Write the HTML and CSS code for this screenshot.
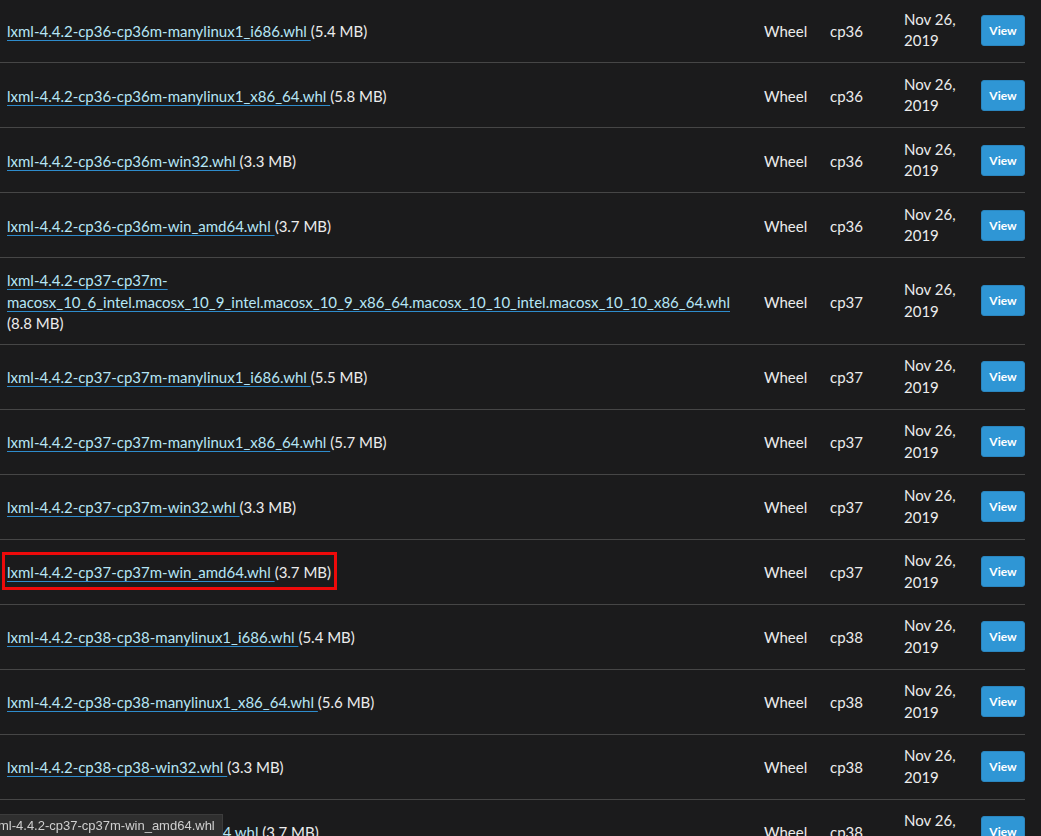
FILE: index.html
```html
<!DOCTYPE html>
<html lang="en">
<head>
<meta charset="utf-8">
<title>lxml files</title>
<link rel="stylesheet" href="styles.css">
</head>
<body>
<div class="page">
<table class="files">
<colgroup>
<col class="c-name"><col class="c-type"><col class="c-py"><col class="c-date"><col class="c-btn">
</colgroup>
<tbody>
<tr><td class="name"><a href="#">lxml-4.4.2-cp36-cp36m-manylinux1_i686.whl </a>(5.4 MB)</td><td>Wheel</td><td>cp36</td><td class="date">Nov 26,<br>2019</td><td class="act"><button class="view">View</button></td></tr>
<tr><td class="name"><a href="#">lxml-4.4.2-cp36-cp36m-manylinux1_x86_64.whl </a>(5.8 MB)</td><td>Wheel</td><td>cp36</td><td class="date">Nov 26,<br>2019</td><td class="act"><button class="view">View</button></td></tr>
<tr><td class="name"><a href="#">lxml-4.4.2-cp36-cp36m-win32.whl </a>(3.3 MB)</td><td>Wheel</td><td>cp36</td><td class="date">Nov 26,<br>2019</td><td class="act"><button class="view">View</button></td></tr>
<tr><td class="name"><a href="#">lxml-4.4.2-cp36-cp36m-win_amd64.whl </a>(3.7 MB)</td><td>Wheel</td><td>cp36</td><td class="date">Nov 26,<br>2019</td><td class="act"><button class="view">View</button></td></tr>
<tr><td class="name"><a href="#">lxml-4.4.2-cp37-cp37m-<br>macosx_10_6_intel.macosx_10_9_intel.macosx_10_9_x86_64.macosx_10_10_intel.macosx_10_10_x86_64.whl</a><br>(8.8 MB)</td><td>Wheel</td><td>cp37</td><td class="date">Nov 26,<br>2019</td><td class="act"><button class="view">View</button></td></tr>
<tr><td class="name"><a href="#">lxml-4.4.2-cp37-cp37m-manylinux1_i686.whl </a>(5.5 MB)</td><td>Wheel</td><td>cp37</td><td class="date">Nov 26,<br>2019</td><td class="act"><button class="view">View</button></td></tr>
<tr><td class="name"><a href="#">lxml-4.4.2-cp37-cp37m-manylinux1_x86_64.whl </a>(5.7 MB)</td><td>Wheel</td><td>cp37</td><td class="date">Nov 26,<br>2019</td><td class="act"><button class="view">View</button></td></tr>
<tr><td class="name"><a href="#">lxml-4.4.2-cp37-cp37m-win32.whl </a>(3.3 MB)</td><td>Wheel</td><td>cp37</td><td class="date">Nov 26,<br>2019</td><td class="act"><button class="view">View</button></td></tr>
<tr><td class="name"><span class="marked"><a href="#">lxml-4.4.2-cp37-cp37m-win_amd64.whl </a>(3.7 MB)</span></td><td>Wheel</td><td>cp37</td><td class="date">Nov 26,<br>2019</td><td class="act"><button class="view">View</button></td></tr>
<tr><td class="name"><a href="#">lxml-4.4.2-cp38-cp38-manylinux1_i686.whl </a>(5.4 MB)</td><td>Wheel</td><td>cp38</td><td class="date">Nov 26,<br>2019</td><td class="act"><button class="view">View</button></td></tr>
<tr><td class="name"><a href="#">lxml-4.4.2-cp38-cp38-manylinux1_x86_64.whl </a>(5.6 MB)</td><td>Wheel</td><td>cp38</td><td class="date">Nov 26,<br>2019</td><td class="act"><button class="view">View</button></td></tr>
<tr><td class="name"><a href="#">lxml-4.4.2-cp38-cp38-win32.whl </a>(3.3 MB)</td><td>Wheel</td><td>cp38</td><td class="date">Nov 26,<br>2019</td><td class="act"><button class="view">View</button></td></tr>
<tr><td class="name"><a href="#">lxml-4.4.2-cp38-cp38-win_amd64.whl </a>(3.7 MB)</td><td>Wheel</td><td>cp38</td><td class="date">Nov 26,<br>2019</td><td class="act"><button class="view">View</button></td></tr>
</tbody>
</table>
</div>
<div class="status">ml-4.4.2-cp37-cp37m-win_amd64.whl</div>
</body>
</html>
```
FILE: styles.css
```css
html, body {
  margin: 0;
  padding: 0;
  background: #1b1b1c;
  height: 100%;
  overflow: hidden;
}
.page {
  margin-top: -2px;
}
.files {
  width: 1025px;
  table-layout: fixed;
  border-collapse: collapse;
  font-family: Lato, "Noto Sans", sans-serif;
  font-size: 15px;
  line-height: 21.5px;
  color: #ececec;
}
.c-name { width: 757px; }
.c-type { width: 66px; }
.c-py { width: 74px; }
.c-date { width: 77px; }
.c-btn { width: 51px; }
.files td {
  padding: 12px 7px 9px;
  border-bottom: 1px solid #464646;
  vertical-align: middle;
}
.files td.date {
  padding-top: 10.5px;
  padding-bottom: 10.5px;
}
.files td.act {
  padding: 10.5px 0 10.5px 7px;
}
.files a {
  color: #b6e6f6;
  text-decoration: underline;
  text-decoration-color: #2e8ccc;
  text-underline-offset: 3px;
  text-decoration-thickness: 1px;
}
.view {
  width: 44px;
  height: 31px;
  border: 1px solid #2a86c0;
  border-radius: 3px;
  background: #2f96d5;
  color: #ffffff;
  font-family: Lato, "Noto Sans", sans-serif;
  font-weight: 700;
  font-size: 12px;
  padding: 0;
  display: block;
}
.marked {
  position: relative;
}
.marked::after {
  content: "";
  position: absolute;
  left: -5px;
  right: -6px;
  top: -11px;
  bottom: -9px;
  border: 3px solid #ee0a0a;
}
.status {
  position: fixed;
  left: 0;
  bottom: 0;
  height: 21px;
  padding: 0 7px 0 0;
  background: #2f2f2f;
  border-top: 1px solid #3c3c3c;
  border-right: 1px solid #3c3c3c;
  color: #cfcfcf;
  font-family: "Liberation Sans", Arial, sans-serif;
  font-size: 13px;
  line-height: 21px;
  white-space: nowrap;
  text-indent: -2px;
}
```
